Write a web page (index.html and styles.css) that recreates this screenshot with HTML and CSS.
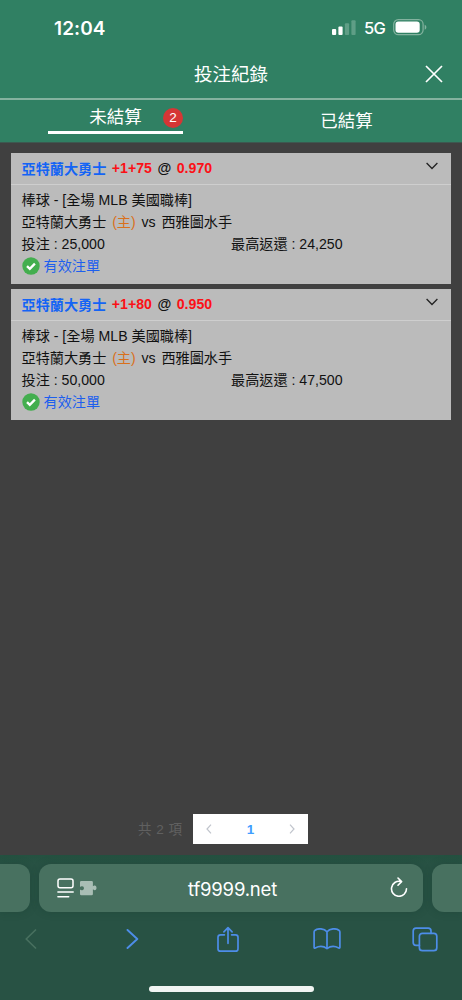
FILE: index.html
```html
<!DOCTYPE html>
<html lang="zh-Hant">
<head>
<meta charset="utf-8">
<title>投注紀錄</title>
<link rel="stylesheet" href="styles.css">
</head>
<body>
<div class="screen">
  <header class="header">
    <div class="status">
      <span class="clock">12:04</span>
      <div class="status-icons">
        <svg class="signal" width="24" height="15" viewBox="0 0 24 15"><rect x="0" y="9" width="4.2" height="6" rx="1"/><rect x="6.4" y="6.5" width="4.2" height="8.5" rx="1"/><rect class="faint" x="12.9" y="3.3" width="4.2" height="11.7" rx="1"/><rect class="faint" x="19.4" y="0.3" width="4.2" height="14.7" rx="1"/></svg>
        <span class="network">5G</span>
        <svg class="battery" width="34" height="17" viewBox="0 0 34 17"><rect x=".7" y=".7" width="29.4" height="15" rx="4.6" fill="none" stroke="#83b29f" stroke-width="1.2"/><rect x="2.5" y="2.6" width="24.2" height="11.2" rx="2.8" fill="#fff"/><path d="M31.7 5.7v5c2.2-.8 2.2-4.2 0-5z" fill="#83b29f"/></svg>
      </div>
    </div>
    <div class="titlebar">
      <h1 class="title">投注紀錄</h1>
      <svg class="close" width="18" height="18" viewBox="0 0 18 18"><path d="M1 1l16 16M17 1L1 17"/></svg>
    </div>
    <nav class="tabs">
      <div class="tab active"><span class="tab-label">未結算</span><span class="badge">2</span></div>
      <div class="tab"><span class="tab-label">已結算</span></div>
    </nav>
  </header>

  <main class="content">
    <article class="card">
      <div class="card-head">
        <span class="team">亞特蘭大勇士</span><span class="red">+1+75</span><span>@</span><span class="red">0.970</span>
        <svg class="chevron" width="12" height="8" viewBox="0 0 12 8"><path d="M.6 1L6 6.5 11.4 1"/></svg>
      </div>
      <div class="card-body">
        <p class="line">棒球 - [全場 MLB 美國職棒]</p>
        <p class="line match"><span>亞特蘭大勇士</span><span class="home">(主)</span><span>vs</span><span>西雅圖水手</span></p>
        <p class="line amounts"><span>投注 : 25,000</span><span>最高返還 : 24,250</span></p>
        <p class="line valid"><svg width="18" height="18" viewBox="0 0 18 18"><circle cx="9" cy="9" r="8.7" fill="#43ae4e"/><path d="M5 9.1l2.8 2.8 5.1-5.3" fill="none" stroke="#fff" stroke-width="2.3"/></svg><span>有效注單</span></p>
      </div>
    </article>
    <article class="card">
      <div class="card-head">
        <span class="team">亞特蘭大勇士</span><span class="red">+1+80</span><span>@</span><span class="red">0.950</span>
        <svg class="chevron" width="12" height="8" viewBox="0 0 12 8"><path d="M.6 1L6 6.5 11.4 1"/></svg>
      </div>
      <div class="card-body">
        <p class="line">棒球 - [全場 MLB 美國職棒]</p>
        <p class="line match"><span>亞特蘭大勇士</span><span class="home">(主)</span><span>vs</span><span>西雅圖水手</span></p>
        <p class="line amounts"><span>投注 : 50,000</span><span>最高返還 : 47,500</span></p>
        <p class="line valid"><svg width="18" height="18" viewBox="0 0 18 18"><circle cx="9" cy="9" r="8.7" fill="#43ae4e"/><path d="M5 9.1l2.8 2.8 5.1-5.3" fill="none" stroke="#fff" stroke-width="2.3"/></svg><span>有效注單</span></p>
      </div>
    </article>
    <div class="pagination">
      <span class="total">共 2 項</span>
      <div class="pager">
        <svg width="6" height="10" viewBox="0 0 6 10"><path d="M5 .7L1 5l4 4.3"/></svg>
        <span class="page">1</span>
        <svg width="6" height="10" viewBox="0 0 6 10"><path d="M1 .7L5 5 1 9.3"/></svg>
      </div>
    </div>
  </main>

  <footer class="browser">
    <div class="address-row">
      <div class="side left"></div>
      <div class="address">
        <svg class="reader" width="40" height="20" viewBox="0 0 40 20"><g fill="none" stroke="#fff" stroke-width="1.5" stroke-linecap="round"><rect x="1" y=".9" width="15" height="8.9" rx="2"/><path d="M.9 14h15.300M.9 18.700h10.800"/></g><path d="M24.300 3h10.300q1.300 0 1.300 1.300v3.900c.7 0 .9-.6 1.800-.6 2.400 0 2.400 4.600 0 4.600-.9 0-1.100-.6-1.800-.6v4.300q0 1.300-1.300 1.300H24.300q-1.300 0-1.300-1.300v-4.200c.8 0 1.200.5 2.200.5 2.300 0 2.300-3.900 0-3.900-1 0-1.400.5-2.200.5V4.300q0-1.300 1.300-1.300z" fill="#a9beb5"/></svg>
        <span class="url">tf9999.net</span>
        <svg class="reload" width="18" height="20" viewBox="0 0 18 20"><path d="M10.800 4.500A7.500 7.500 0 1 0 16.500 11.700M8 1l3.600 3.600-3.600 3.600" stroke-linejoin="round"/></svg>
      </div>
      <div class="side right"></div>
    </div>
    <div class="toolbar">
      <svg class="back" width="12" height="20" viewBox="0 0 12 20"><path d="M10.500 1L1.200 10l9.300 9"/></svg>
      <svg class="forward" width="13" height="20" viewBox="0 0 13 20"><path d="M1.500 1l9.800 9-9.800 9" stroke-width="1.9"/></svg>
      <svg width="24" height="27" viewBox="0 0 24 27"><path d="M8.400 8.800H4.500Q2 8.800 2 11.300v11.400q0 2.500 2.500 2.500h15q2.500 0 2.500-2.500V11.300q0-2.500-2.500-2.500h-3.900M12 17.300V1.800M7.900 5.800L12 1.700l4.100 4.100"/></svg>
      <svg width="28" height="22" viewBox="0 0 28 22"><path d="M14 3.800C11-.1 4.500.2 1.800 2.500q-.7.500-.7 1.400v15.300q0 1.200 1.100.7c4.100-2.100 8.500-1.900 11.800.7 3.300-2.600 7.700-2.800 11.800-.7 1.100.5 1.100-.7 1.100-.7V3.900q0-.9-.7-1.400C23.500.2 17-.1 14 3.800zv16.800"/></svg>
      <svg width="26" height="25" viewBox="0 0 26 25"><rect x="7.400" y="6.300" width="17.400" height="17.400" rx="3"/><path d="M7.400 18.300H4q-2.800 0-2.800-2.800V4q0-2.800 2.800-2.800h12.200q2.800 0 2.800 2.800v2.300"/></svg>
    </div>
    <div class="home-bar"></div>
  </footer>
</div>
</body>
</html>
```
FILE: styles.css
```css
* { box-sizing: border-box; }
body { margin: 0; background: #404040; font-family: "Liberation Sans", "Noto Sans CJK TC", sans-serif; }
h1, p { margin: 0; font-weight: 400; }
svg { display: block; flex: none; }
span { white-space: nowrap; }
.screen { width: 462px; height: 1000px; display: flex; flex-direction: column; overflow: hidden; background: #404040; }

.header { height: 143px; background: #308063; color: #fff; border-bottom: 1px solid #3c5950; }
.status { height: 54px; padding: 2px 35px 0 54px; display: flex; align-items: center; justify-content: space-between; }
.clock { font: 600 19px/24px Inter, sans-serif; letter-spacing: .1px; padding-top: 1px; }
.status-icons { display: flex; align-items: center; padding-bottom: 1px; }
.signal { fill: #fff; margin-right: 8px; }
.faint { fill: #5f9e86; }
.network { font: 500 16.5px/20px Inter, sans-serif; width: 21px; margin-right: 8px; letter-spacing: -.6px; }
.battery { margin-top: 0; }
.titlebar { height: 46px; display: grid; grid-template-columns: 1fr auto 1fr; align-items: center; border-bottom: 2px solid #84b29f; padding-bottom: 4px; }
.title { grid-column: 2; font-size: 18.5px; line-height: 24px; padding-top: 1px; }
.close { justify-self: end; margin-right: 19px; fill: none; stroke: #fff; stroke-width: 1.7; }
.tabs { height: 42px; display: grid; grid-template-columns: 1fr 1fr; justify-items: center; }
.tab { width: 135px; height: 34px; display: flex; justify-content: center; align-items: center; position: relative; margin-top: 4px; }
.active { margin-top: 0; border-bottom: 3px solid #fff; padding-top: 3px; }
.tab-label { font-size: 17.5px; line-height: 24px; }
.badge { position: absolute; right: 0; top: 8px; width: 20px; height: 20px; border-radius: 50%; background: #d53635; font: 13.5px/20px "Liberation Sans", sans-serif; text-align: center; }

.content { height: 712px; padding: 10px 11px 11px; display: flex; flex-direction: column; gap: 5px; }
.card { height: 131px; background: #bbb; color: #111; font-size: 14.15px; }
.card-head { height: 32px; display: flex; align-items: center; gap: 5.5px; padding: 0 13px 2px 10.5px; border-bottom: 1px solid #cecece; font-weight: 700; }
.team { color: #1464f5; }
.red { color: #fb1016; }
.chevron { margin: -3px 0 0 auto; fill: none; stroke: #222; stroke-width: 1.3; }
.card-body { padding: 4px 10.5px 0; }
.line { height: 22px; line-height: 22px; white-space: pre; }
.match { display: flex; gap: 5.8px; }
.home { color: #d9701c; }
.amounts { display: grid; grid-template-columns: 209.5px 1fr; }
.valid { display: flex; align-items: center; gap: 4px; color: #1d5fee; height: 22px; line-height: 22px; }
.pagination { margin-top: auto; height: 30px; display: flex; align-items: center; padding-left: 127px; gap: 11px; }
.total { color: #606060; font-size: 13.5px; letter-spacing: .5px; width: 44px; padding-bottom: 2px; }
.pager { width: 115px; height: 30px; background: #fff; display: flex; justify-content: space-between; align-items: center; padding: 0 13px; }
.pager svg { fill: none; stroke: #c0c4cc; stroke-width: 1.2; }
.page { color: #409eff; font-weight: 700; font-size: 13.5px; }

.browser { height: 145px; background: linear-gradient(#245140, #285244 9px, #285244); display: flex; flex-direction: column; }
.address-row { display: flex; gap: 9px; padding-top: 9px; height: 57px; }
.side, .address { background: #487160; height: 48px; box-shadow: 0 0 8px rgba(15, 50, 37, .22); }
.left { width: 30px; border-radius: 0 12px 12px 0; }
.right { width: 30px; border-radius: 12px 0 0 12px; }
.address { width: 384px; border-radius: 12px; display: grid; grid-template-columns: 1fr auto 1fr; align-items: center; padding: 0 15px 0 18px; }
.url { color: #fff; font: 18.5px/24px Inter, sans-serif; letter-spacing: -.2px; padding-top: 1px; }
.reload { justify-self: end; fill: none; stroke: #fff; stroke-width: 1.6; stroke-linecap: round; margin-bottom: 3px; }
.toolbar { width: 494px; height: 54px; display: grid; grid-template-columns: repeat(5, 98.5px); align-items: center; justify-items: center; margin-left: -18px; flex: none; }
.toolbar svg { fill: none; stroke: #4d8de8; stroke-width: 1.7; stroke-linecap: round; stroke-linejoin: round; }
.toolbar .back { stroke: #48705f; }
.toolbar .forward { margin-left: 5px; }
.home-bar { width: 165px; height: 6px; border-radius: 3px; background: #f1f5f3; margin: 20px auto 0; }
```
